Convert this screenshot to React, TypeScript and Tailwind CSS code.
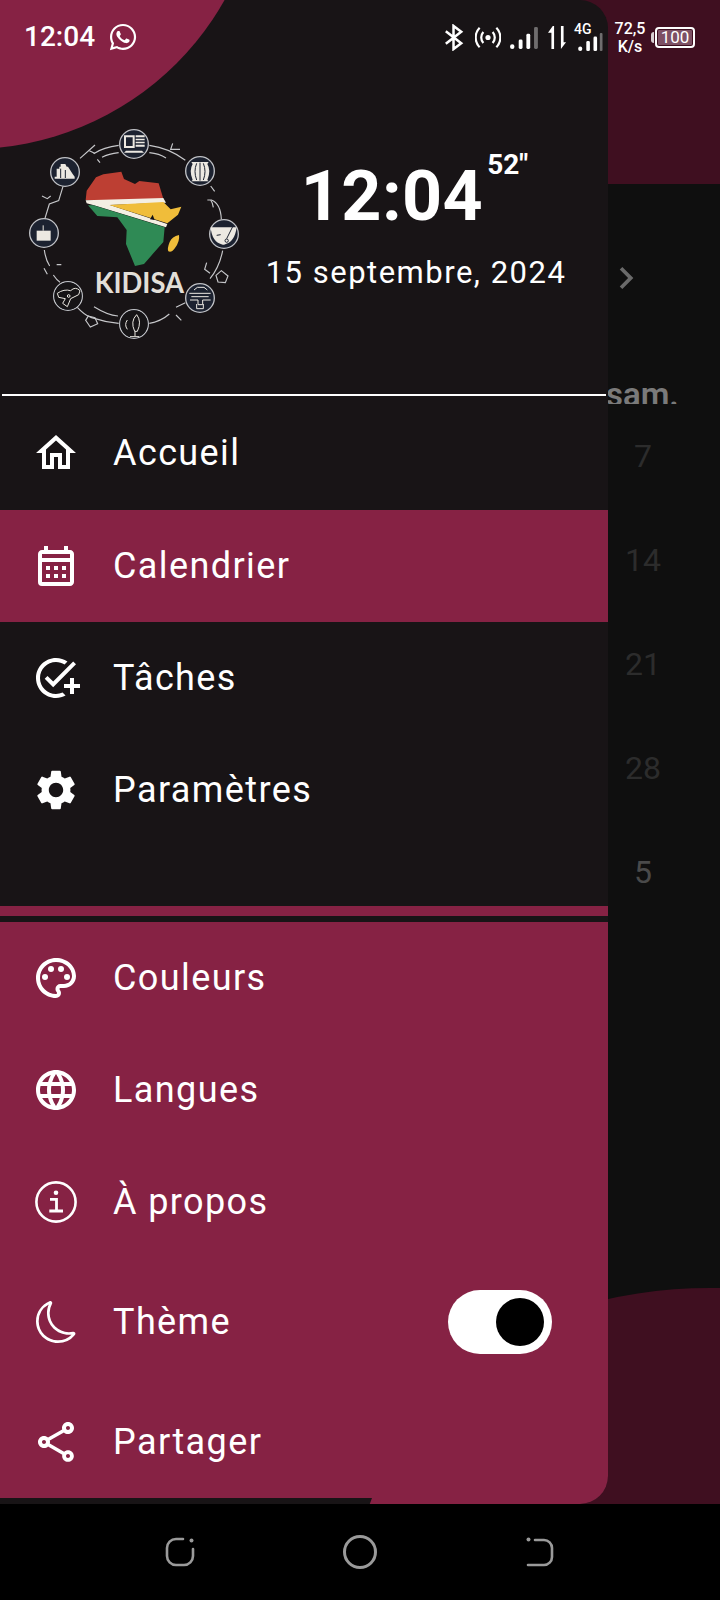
import { FaWhatsapp } from 'react-icons/fa'
import { BsMoon } from 'react-icons/bs'
import {
  MdChevronRight,
  MdLanguage,
  MdOutlineAddTask,
  MdOutlineCalendarMonth,
  MdOutlineHome,
  MdOutlinePalette,
  MdOutlineShare,
  MdSettings,
} from 'react-icons/md'

const font = { fontFamily: 'Roboto, sans-serif' }

const InfoIcon = () => (
  <svg viewBox="0 0 42 42" className="w-[42px] h-[42px] shrink-0" fill="none" stroke="currentColor">
    <circle cx="21" cy="21" r="19.6" strokeWidth="2.6" />
    <circle cx="21" cy="11.7" r="2.3" fill="currentColor" stroke="none" />
    <path d="M15 18.3H21.5V30M14.3 30H28" strokeWidth="2.8" />
  </svg>
)

const MenuRow = ({
  icon,
  label,
  active,
  tall,
}: {
  icon: React.ReactNode
  label: string
  active?: boolean
  tall?: boolean
}) => (
  <div className={`flex items-center pl-[36px] text-white ${tall ? 'h-[114px]' : 'h-[112px]'} ${active ? 'bg-[#862244]' : ''}`}>
    <div className="w-[40px] h-[48px] flex items-center justify-center shrink-0">{icon}</div>
    <span className="ml-[37px] text-[36px] tracking-[1.4px]">{label}</span>
  </div>
)

const StatusBar = () => (
  <div className="absolute top-0 left-0 w-[720px] h-[74px] flex items-center pl-[24px] text-white">
    <span className="text-[28px] font-medium leading-none">12:04</span>
    <FaWhatsapp className="ml-[13px] w-[30px] h-[30px]" />
    <div className="ml-auto mr-[25px] flex items-center">
      <svg viewBox="0 0 20 28" className="w-[20px] h-[27px]" fill="none" stroke="#fff" strokeWidth="2.6">
        <path d="M1.5 7.5 17.5 20 9.5 26V2L17.5 8 1.5 20.5" />
      </svg>
      <svg viewBox="0 0 28 26" className="ml-[11px] w-[26px] h-[25px]" fill="none" stroke="#fff" strokeWidth="2.4">
        <circle cx="14" cy="13" r="2.8" fill="#fff" stroke="none" />
        <path d="M9 7a9 9 0 0 0 0 12M19 7a9 9 0 0 1 0 12M5 2.5a15 15 0 0 0 0 21M23 2.5a15 15 0 0 1 0 21" />
      </svg>
      <svg viewBox="0 0 30 24" className="ml-[8px] w-[29px] h-[23px] mt-[2px]">
        <rect x="1" y="18" width="4.5" height="5" rx="2.2" fill="#fff" />
        <rect x="10" y="13" width="4" height="10" rx="1.5" fill="#fff" />
        <rect x="18" y="7" width="4" height="16" rx="1.5" fill="#fff" />
        <rect x="26" y="0" width="4" height="23" rx="1.5" fill="#6f6d6e" />
      </svg>
      <svg viewBox="0 0 20 24" className="ml-[10px] w-[19px] h-[23px] mt-[1px]" fill="#fff">
        <path d="M5 0 0 7h3.6v17h2.8V0zM13.6 0v24L19 17h-2.6V0z" />
      </svg>
      <div className="relative ml-[7px] w-[31px] h-[28px] flex items-end">
        <span className="absolute -top-[1px] left-0 text-[14px] font-medium leading-none">4G</span>
        <svg viewBox="0 0 30 20" className="w-[30px] h-[18px]">
          <rect x="3" y="15" width="4.5" height="5" rx="2.2" fill="#fff" />
          <rect x="12" y="9" width="4" height="11" rx="1.5" fill="#fff" />
          <rect x="20" y="4" width="4" height="16" rx="1.5" fill="#fff" />
          <rect x="27" y="0" width="3" height="20" rx="1" fill="#6f6d6e" />
        </svg>
      </div>
      <div className="ml-[8px] w-[34px] flex flex-col items-center text-[16px] leading-[18px] font-medium mt-[2px]">
        <span>72,5</span>
        <span>K/s</span>
      </div>
      <div className="ml-[4px] w-[3px] h-[11px] bg-white/80 rounded-l-sm" />
      <div className="ml-[1px] w-[40px] h-[21px] rounded-[4px] border-2 border-white p-[1px] flex">
        <div className="flex-1 bg-[#7d5064] rounded-[1px] flex items-center justify-center text-[17px] leading-none">
          100
        </div>
      </div>
    </div>
  </div>
)

const Logo = () => {
  const circles = [
    [342, 72],
    [540, 153],
    [612, 342],
    [540, 534],
    [342, 612],
    [144, 528],
    [72, 339],
    [135, 156],
  ]
  return (
    <svg viewBox="0 0 690 690" className="w-[230px] h-[230px] shrink-0">
      <g fill="none" stroke="#c6c7ca" strokeWidth="3.5">
        <path d="M388 76q60 8 108 45M296 76q-45 5-75 25M388 98q30 3 50 16M296 98q-30 3-50 14M180 115l45-40" />
        <path d="M572 198l12 16M562 240h12q28 10 30 58M608 392q-10 50-38 84M130 196l-14 46-28 10-14 46M73 390q4 30 16 48M72 445l10 18M100 465q10 15 20 22M110 434h14" />
        <path d="M172 562q20 22 40 30 42 14 84 18M388 610q35-6 60-28M222 560q40 25 72 28M496 548l-28 14M468 585l16 16M560 428l-6 20 16 12M458 70l-6 18h28M572 240q6 8 8 22M66 228l16 8 10-8M232 118l8 10M208 92l16 8" />
        <path d="m205 588 20 5 8 18-22 10-14-20zM604 452l20 16-8 20-22-2-6-20z" />
      </g>
      <g fill="#1c2230" stroke="#c0c2c6" strokeWidth="4">
        {circles.map(([x, y]) => (
          <circle key={x + '-' + y} cx={x} cy={y} r="43" />
        ))}
      </g>
      <circle cx="144" cy="528" r="41" fill="#161416" />
      <circle cx="342" cy="612" r="41" fill="#161416" />
      <g fill="#ece9e2">
        <path d="M312 46h32v38h-32zM318 52v26h20V52z" fillRule="evenodd" />
        <path d="M347 46h27v6h-27zM347 56h27v5h-27zM347 65h27v5h-27zM347 74h27v6h-27zM318 92h48l6 6h-60z" />
        <path d="M514 126h52l-4 6q12 20 0 48l4 4h-52l4-4q-12-28 0-48z" />
        <path d="M572 322h78q-6 46-38 52h-4q-32-6-36-52z" />
        <rect x="50" y="332" width="42" height="30" />
        <rect x="68" y="316" width="3" height="16" />
        <path d="M104 176v-6h6v-24h8v-6h4v-8h14l4 8h4l14 22 6 8v6z" />
      </g>
      <g fill="none" stroke="#1c2230" strokeWidth="3">
        <path d="M530 130q-10 24 0 50M540 128v54M550 130q10 24 0 50" />
        <path d="M590 346l12-2M640 316l-20 40" />
        <circle cx="620" cy="362" r="5" />
        <path d="M122 146v28M136 150v24" />
      </g>
      <g fill="none" stroke="#ece9e2" strokeWidth="3">
        <path d="M508 520h64M514 530h52M510 540h24v14h14v-14h24M530 552v14h20v-14M522 510l10-8h20l10 8" />
        <path d="M350 584q-20 20-6 50h8q14-30-2-50zM345 634v14M330 650h28M322 600q-10 14 0 28" />
        <path d="M112 520q20-14 40-8 14-14 28 0l-4 12-24 12-10 24-14-10 8-14-20-4z" />
        <circle cx="146" cy="528" r="4" />
      </g>
      <path
        d="M197 240 200 212 228 172 250 163 304 155 312 177 345 192 358 183 416 190 430 236 300 243z"
        fill="#bd3f33"
      />
      <path d="M197 241 430 234 438 248 270 255 442 312 438 322 222 256 200 250z" fill="#f4efe3" />
      <path d="M268 255 430 246 452 268 484 260 474 284 442 310z" fill="#f0bd3a" />
      <path
        d="M204 256 232 288 292 292 320 330 318 372 345 438 372 432 400 400 430 366 434 322 220 256z"
        fill="#2f8a55"
      />
      <path d="M477 345Q480 364 465 384 456 398 445 394 441 386 449 366 456 350 477 345z" fill="#f0bd3a" />
      <path d="M390 298l8-14 6 16z" fill="#141214" />
      <text
        x="224"
        y="518"
        fill="#e2dfd8"
        fontFamily="Lato, sans-serif"
        fontSize="86"
        fontWeight="700"
        textLength="268"
        lengthAdjust="spacingAndGlyphs"
      >
        KIDISA
      </text>
    </svg>
  )
}

const Header = () => (
  <div className="h-[394px] flex pl-[20px] pt-[120px] shrink-0">
    <Logo />
    <div className="flex-1 flex flex-col items-center pt-[41px] pr-[26px] text-white">
      <div className="relative mr-[48px]">
        <span className="block text-[70px] font-bold leading-[70px] tracking-[0.4px]">12:04</span>
        <span className="absolute left-full ml-[4px] -top-[10px] text-[28px] font-bold leading-none">52"</span>
      </div>
      <span className="mt-[26px] text-[31px] tracking-[1.5px] leading-none whitespace-nowrap">15 septembre, 2024</span>
    </div>
  </div>
)

const Drawer = () => (
  <div className="absolute top-0 left-0 w-[608px] h-[1504px] rounded-r-[28px] overflow-hidden bg-[#181416] flex flex-col">
    <div className="absolute -left-[322px] -top-[435px] w-[584px] h-[584px] rounded-full bg-[#862244]" />
    <div className="relative flex-1 flex flex-col">
      <Header />
      <div className="h-[2px] bg-white mx-[2px] shrink-0" />
      <MenuRow tall icon={<MdOutlineHome className="w-[48px] h-[48px] shrink-0" />} label="Accueil" />
      <MenuRow active icon={<MdOutlineCalendarMonth className="w-[48px] h-[48px] shrink-0" />} label="Calendrier" />
      <MenuRow icon={<MdOutlineAddTask className="w-[48px] h-[48px] shrink-0" />} label="Tâches" />
      <MenuRow icon={<MdSettings className="w-[48px] h-[48px] shrink-0" />} label="Paramètres" />
      <div className="h-[10px] bg-[#862244] mt-[60px] shrink-0" />
      <div className="h-[6px] shrink-0" />
      <div className="relative flex-1 bg-[#862244]">
        <div className="absolute left-0 bottom-0 w-[372px] h-[6px] bg-[#181416] [clip-path:polygon(0_0,100%_0,99.4%_100%,0_100%)]" />
        <MenuRow icon={<MdOutlinePalette className="w-[48px] h-[48px] shrink-0" />} label="Couleurs" />
        <MenuRow icon={<MdLanguage className="w-[48px] h-[48px] shrink-0" />} label="Langues" />
        <MenuRow icon={<InfoIcon />} label="À propos" />
        <div className="h-[128px] flex items-center pl-[37px] pr-[56px] text-white">
          <div className="w-[40px] flex items-center justify-center">
            <BsMoon className="w-[42px] h-[42px] shrink-0" />
          </div>
          <span className="ml-[36px] text-[36px] tracking-[1.4px]">Thème</span>
          <div className="ml-auto w-[104px] h-[64px] rounded-full bg-white flex items-center justify-end p-[8px]">
            <div className="w-[48px] h-[48px] rounded-full bg-black" />
          </div>
        </div>
        <MenuRow icon={<MdOutlineShare className="w-[48px] h-[48px] shrink-0" />} label="Partager" />
      </div>
    </div>
  </div>
)

const Background = () => (
  <div className="relative h-[1504px] bg-[#0f0f0f] overflow-hidden shrink-0">
    <div className="h-[184px] bg-[#3f0f20]" />
    <div className="flex justify-end">
      <div className="w-[112px] flex flex-col">
        <div className="h-[188px] flex items-center">
          <MdChevronRight className="w-[44px] h-[44px] text-[#6a6a6a] -ml-[4px]" />
        </div>
        <div className="mt-[5px] h-[27px] overflow-hidden">
          <span className="block -ml-[2px] pt-[2px] text-[33px] font-semibold leading-[32px] text-[#7a7a7a]">sam.</span>
        </div>
        <div className="flex flex-col text-[32px] leading-[104px] text-center pr-[42px] text-[#2c2c2c]">
          <span>7</span>
          <span>14</span>
          <span>21</span>
          <span>28</span>
          <span className="text-[#4a4a4a]">5</span>
        </div>
      </div>
    </div>
    <div className="absolute left-[340px] top-[1288px] w-[740px] h-[566px] rounded-[50%] bg-[#3f0f20]" />
  </div>
)

const NavBar = () => (
  <div className="h-[96px] bg-black flex items-center justify-center pr-[2px]">
    <svg viewBox="0 0 30 30" className="w-[30px] h-[30px]" fill="none" stroke="#9a9a9a" strokeWidth="2.6" strokeLinecap="round">
      <path d="M18 2h-7a9 9 0 0 0-9 9v8a9 9 0 0 0 9 9h8a9 9 0 0 0 9-9v-7" />
      <circle cx="26.5" cy="3.5" r="2" fill="#9a9a9a" stroke="none" />
    </svg>
    <div className="ml-[148px] w-[34px] h-[34px] rounded-full border-[3px] border-[#9a9a9a]" />
    <svg viewBox="0 0 28 30" className="ml-[149px] w-[28px] h-[30px]" fill="none" stroke="#9a9a9a" strokeWidth="2.6" strokeLinecap="round">
      <path d="M9 3h9a8 8 0 0 1 8 8v9a8 8 0 0 1-8 8H2" />
      <circle cx="2.5" cy="2.5" r="2" fill="#9a9a9a" stroke="none" />
    </svg>
  </div>
)

export default function App() {
  return (
    <div className="relative w-[720px] h-[1600px] overflow-hidden bg-black" style={font}>
      <Background />
      <NavBar />
      <Drawer />
      <StatusBar />
    </div>
  )
}
